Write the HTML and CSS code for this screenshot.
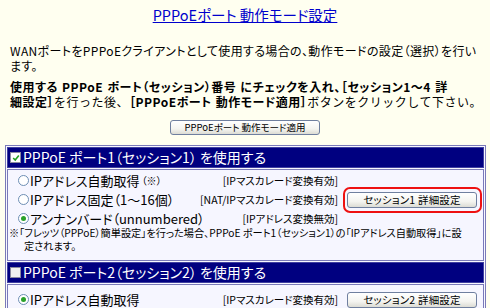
FILE: index.html
```html
<!DOCTYPE html>
<html lang="ja">
<head>
<meta charset="utf-8">
<title>PPPoEポート 動作モード設定</title>
<link rel="stylesheet" href="styles.css">
</head>
<body>
<h1 class="title"><a href="#" class="title-link">PPPoEポート 動作モード設定</a></h1>
<p class="intro">WANポートをPPPoEクライアントとして使用する場合の、動作モードの設定（選択）を行い<br>ます。</p>
<p class="lead"><b>使用する PPPoE ポート（セッション）番号 にチェックを入れ、［セッション1～4 詳<br>細設定］</b><span class="plain">を行った後、</span><b>［PPPoEポート 動作モード適用］</b><span class="plain">ボタンをクリックして下さい。</span></p>
<div class="apply-row"><button class="btn btn-apply" type="button">PPPoEポート 動作モード適用</button></div>

<div class="panel">
  <div class="port-head">
    <span class="chk chk-on"><svg viewBox="0 0 10 10" width="8" height="8"><path d="M1.5 5 L4 7.5 L8.5 2" fill="none" stroke="#21a121" stroke-width="2"/></svg></span>
    <span class="head-text">PPPoE ポート1（セッション1） を使用する</span>
  </div>
  <div class="port-body">
    <div class="opts">
      <label class="opt"><span class="radio"></span>IPアドレス自動取得 <small class="mark">（※）</small></label>
      <span class="mode">[IPマスカレード変換有効]</span>
      <span class="cell-empty"></span>

      <label class="opt"><span class="radio"></span>IPアドレス固定（1～16個）</label>
      <span class="mode">[NAT/IPマスカレード変換有効]</span>
      <span class="btn-wrap"><button class="btn btn-session" type="button">セッション1 詳細設定</button><span class="highlight"></span></span>

      <label class="opt"><span class="radio radio-on"></span>アンナンバード（unnumbered）</label>
      <span class="mode">[IPアドレス変換無効]</span>
      <span class="cell-empty"></span>
    </div>
    <p class="note">※「フレッツ（PPPoE）簡単設定」を行った場合、PPPoE ポート1（セッション1）の「IPアドレス自動取得」に設<br>定されます。</p>
  </div>

  <div class="port-head">
    <span class="chk"></span>
    <span class="head-text">PPPoE ポート2（セッション2） を使用する</span>
  </div>
  <div class="port-body port-body-2">
    <div class="opts">
      <label class="opt"><span class="radio radio-on"></span>IPアドレス自動取得</label>
      <span class="mode">[IPマスカレード変換有効]</span>
      <span class="btn-wrap"><button class="btn btn-session" type="button">セッション2 詳細設定</button></span>
    </div>
  </div>
</div>
</body>
</html>
```

FILE: styles.css
```css
html, body {
  margin: 0;
  padding: 0;
  background: #fffff0;
}
body {
  font-family: "Noto Sans CJK JP", "Noto Sans", sans-serif;
  font-feature-settings: "palt";
  color: #000;
  font-size: 12px;
}
.title {
  margin: 0;
  padding-top: 7px;
  text-align: center;
  font-size: 14.5px;
  font-weight: normal;
  line-height: 16px;
}
.title-link {
  color: #0000cc;
  text-decoration: underline;
}
.intro, .lead {
  margin: 0;
  padding: 0 0 0 10px;
  line-height: 15px;
  font-size: 12px;
  white-space: nowrap;
}
.intro {
  margin-top: 20px;
  letter-spacing: 0.36px;
}
.lead {
  margin-top: 6px;
  letter-spacing: 0.5px;
  word-spacing: 1px;
}
.lead b { font-weight: bold; }
.lead .plain { font-feature-settings: normal; }
.apply-row {
  display: flex;
  justify-content: center;
  margin-top: 11px;
}
.btn {
  font-family: "Noto Sans CJK JP", sans-serif;
  font-feature-settings: "palt";
  border: 1px solid #6f7f9f;
  border-radius: 3px;
  background: linear-gradient(#ffffff, #f4f4f0 60%, #dcdcd4);
  color: #000;
  padding: 0;
  margin: 0;
  line-height: 13px;
}
.btn-apply {
  width: 150px;
  height: 15px;
  font-size: 9.5px;
}
.panel {
  margin: 10px 0 0 5px;
  width: 477px;
  border: 1px solid #7a7ab8;
  padding: 1px;
  background: #f8f8ff;
}
.port-head {
  display: flex;
  align-items: center;
  gap: 2px;
  height: 19px;
  background: #000080;
  border: 1px solid #4040a0;
  color: #fff;
  padding-left: 2px;
  font-size: 14px;
  line-height: 19px;
  white-space: nowrap;
}
.chk {
  display: inline-flex;
  align-items: center;
  justify-content: center;
  width: 9px;
  height: 9px;
  border: 1px solid #8a8aa0;
  background: #f0f0f0;
}
.chk-on { background: #fff; }
.port-body {
  margin: 1px 0;
  border: 1px solid #7a7ab8;
  background: #f6f6ff;
  padding: 1px 6px 8px 10px;
}
.port-body-2 { padding-top: 5px; }
.opts {
  display: grid;
  grid-template-columns: minmax(0, 1fr) auto 130px;
  column-gap: 9px;
  align-items: center;
}
.opt {
  display: flex;
  align-items: center;
  height: 19px;
  font-size: 13px;
  white-space: nowrap;
}
.mark { font-size: 10px; margin-left: 2px; }
.radio {
  flex: none;
  width: 9px;
  height: 9px;
  border: 1px solid #6d8eb4;
  border-radius: 50%;
  background: #fff;
  margin-right: 1px;
  position: relative;
}
.radio-on::after {
  content: "";
  position: absolute;
  left: 2px;
  top: 2px;
  width: 5px;
  height: 5px;
  border-radius: 50%;
  background: #2aa12a;
}
.mode {
  font-size: 10.5px;
  text-align: right;
  white-space: nowrap;
}
.btn-wrap {
  position: relative;
  display: flex;
}
.btn-session {
  width: 130px;
  height: 16px;
  font-size: 10.5px;
  letter-spacing: 0.2px;
}
.highlight {
  position: absolute;
  left: -4px;
  right: -5px;
  top: -5px;
  bottom: -5px;
  border: 2px solid #ee1111;
  border-radius: 7px;
}
.note {
  margin: -2px 0 0 -9px;
  padding-left: 15px;
  text-indent: -15px;
  font-size: 10.2px;
  line-height: 13px;
  white-space: nowrap;
}
```
